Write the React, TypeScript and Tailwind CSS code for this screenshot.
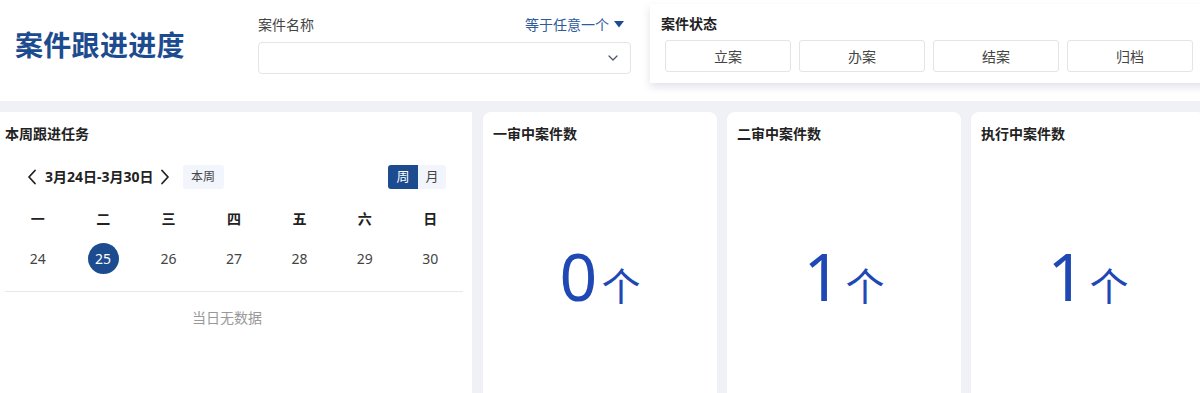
import React from "react";
import { ChevronDown } from "lucide-react";

const weekdays = ["一", "二", "三", "四", "五", "六", "日"];
const dates = [24, 25, 26, 27, 28, 29, 30];
const statuses = ["立案", "办案", "结案", "归档"];
const cards = [
  { title: "一审中案件数", value: "0" },
  { title: "二审中案件数", value: "1" },
  { title: "执行中案件数", value: "1" },
];

function Chev({ dir }: { dir: "l" | "r" }) {
  return (
    <svg width="10" height="16" viewBox="0 0 10 16" className="text-[#222]">
      <polyline
        points={dir === "l" ? "8,1.5 2,8 8,14.5" : "2,1.5 8,8 2,14.5"}
        fill="none"
        stroke="currentColor"
        strokeWidth="1.8"
        strokeLinecap="round"
        strokeLinejoin="round"
      />
    </svg>
  );
}

export default function App() {
  return (
    <div className="w-[1200px] h-[393px] overflow-hidden bg-[#f0f1f6] font-['Noto_Sans','Noto_Sans_CJK_SC',sans-serif] text-[#333]">
      {/* Header */}
      <div className="h-[101px] bg-white flex items-start">
        <div className="w-[258px] shrink-0 pl-[15px] pt-[25px] text-[28px] leading-[40px] font-bold text-[#1d4b8f] tracking-[0.3px]">
          案件跟进进度
        </div>
        <div className="w-[373px] shrink-0 pt-[13px]">
          <div className="flex items-center justify-between h-[22px] text-[14px]">
            <span className="text-[#444]">案件名称</span>
            <span className="flex items-center gap-[5px] pr-[7px] text-[#2f5b9b]">
              等于任意一个
              <svg width="10" height="7" viewBox="0 0 10 7">
                <polygon points="0,0 10,0 5,6.5" fill="#1d4b8f" />
              </svg>
            </span>
          </div>
          <div className="mt-[7px] h-[32px] border border-[#e3e4e8] rounded-[4px] flex items-center justify-end pr-[9px]">
            <ChevronDown size={16} strokeWidth={1.8} className="text-[#4a5568]" />
          </div>
        </div>
        <div className="ml-[19px] mt-[4px] w-[570px] h-[79px] bg-white shadow-[0_4px_8px_rgba(110,110,160,0.2)] pl-[11px] pt-[10px] shrink-0">
          <div className="text-[14px] leading-[20px] font-bold text-[#222]">案件状态</div>
          <div className="mt-[6px] ml-[4px] flex gap-[8px]">
            {statuses.map((s) => (
              <div
                key={s}
                className="w-[126px] h-[32px] border border-[#e3e4e8] rounded-[3px] flex items-center justify-center text-[14px] text-[#444]"
              >
                {s}
              </div>
            ))}
          </div>
        </div>
      </div>

      {/* Body */}
      <div className="mt-[11px] flex">
        {/* Left panel */}
        <div className="w-[472px] h-[290px] bg-white shrink-0 px-[5px] pt-[12px]">
          <div className="text-[14px] leading-[20px] font-bold text-[#222]">本周跟进任务</div>
          <div className="mt-[20px] flex items-center justify-between pl-[22px] pr-[21px] h-[25px]">
            <div className="flex items-center">
              <Chev dir="l" />
              <span className="ml-[8px] text-[14px] font-bold text-[#222]">3月24日-3月30日</span>
              <span className="ml-[6px]">
                <Chev dir="r" />
              </span>
              <span className="ml-[13px] w-[41px] h-[24px] rounded-[3px] bg-[#f2f5fc] flex items-center justify-center text-[12px] text-[#444]">
                本周
              </span>
            </div>
            <div className="flex h-[24px] rounded-[3px] overflow-hidden">
              <span className="w-[30px] flex items-center justify-center bg-[#1d4b8f] text-white text-[13px]">周</span>
              <span className="w-[28px] flex items-center justify-center bg-[#f2f5fc] text-[#444] text-[13px]">月</span>
            </div>
          </div>
          <div className="mt-[17px] grid grid-cols-7 w-[458px] h-[24px] items-center text-center text-[14px] font-bold text-[#222]">
            {weekdays.map((w) => (
              <span key={w}>{w}</span>
            ))}
          </div>
          <div className="mt-[12px] grid grid-cols-7 w-[458px] h-[32px] items-center text-[14px] text-[#444]">
            {dates.map((d) => (
              <div key={d} className="flex justify-center">
                {d === 25 ? (
                  <span className="w-[31px] h-[31px] rounded-full bg-[#1d4b8f] text-white flex items-center justify-center">
                    {d}
                  </span>
                ) : (
                  <span>{d}</span>
                )}
              </div>
            ))}
          </div>
          <div className="mt-[17px] w-[458px] border-t border-[#e8e8ec]" />
          <div className="mt-[16px] w-[444px] text-center text-[14px] leading-[20px] text-[#999]">当日无数据</div>
        </div>

        {/* Cards */}
        {cards.map((c, i) => (
          <div
            key={c.title}
            className={`w-[234px] h-[300px] bg-white rounded-t-[8px] shrink-0 px-[10px] pt-[12px] ${i === 0 ? "ml-[11px]" : "ml-[10px]"}`}
          >
            <div className="text-[14px] leading-[20px] font-bold text-[#222]">{c.title}</div>
            <div className="mt-[98px] flex items-baseline justify-center text-[#1f48b5]">
              <span className="text-[66px] leading-none">{c.value}</span>
              <span className="ml-[4px] text-[39px] leading-none">个</span>
            </div>
          </div>
        ))}
      </div>
    </div>
  );
}
